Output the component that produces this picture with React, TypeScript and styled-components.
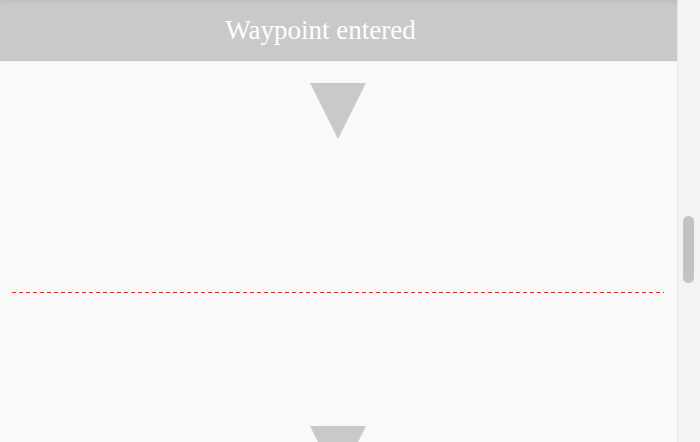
import React from "react";
import styled, { createGlobalStyle } from "styled-components";

const GlobalStyle = createGlobalStyle`
  html, body { margin: 0; padding: 0; }
  body {
    background: #f9f9f9;
    font-family: "Liberation Serif", "Times New Roman", serif;
    overflow: hidden;
  }
`;

const Page = styled.div`
  display: flex;
  width: 700px;
  height: 442px;
  overflow: hidden;
  background: #f9f9f9;
`;

const Main = styled.div`
  flex: 1;
  display: flex;
  flex-direction: column;
  min-width: 0;
`;

const Header = styled.header`
  box-sizing: border-box;
  flex: none;
  height: 61px;
  padding: 1px 36px 0 0;
  display: flex;
  align-items: center;
  justify-content: center;
  background: #c9c9c9;
  border-bottom: 1px solid #c3c3c3;
  box-shadow: inset 0 5px 4px -3px rgba(0, 0, 0, 0.07), 0 1px 2px rgba(0, 0, 0, 0.04);
  color: #ffffff;
  font-size: 27px;
  line-height: 1;
`;

const Content = styled.div`
  flex: 1;
  display: flex;
  flex-direction: column;
  align-items: center;
  padding: 22px 1px 0 0;
  overflow: hidden;
`;

const Marker = styled.div<{ $gap?: number }>`
  flex: none;
  width: 0;
  height: 0;
  margin-top: ${(p) => p.$gap ?? 0}px;
  border-left: 28px solid transparent;
  border-right: 28px solid transparent;
  border-top: 56px solid #c9c9c9;
`;

const TriggerLine = styled.div<{ $gap: number }>`
  flex: none;
  align-self: stretch;
  height: 1px;
  margin: ${(p) => p.$gap}px 12px 0 12px;
  background-image: linear-gradient(to right, #d9322f 4px, transparent 4px);
  background-size: 7px 1px;
  background-repeat: repeat-x;
`;

const ScrollTrack = styled.div`
  flex: none;
  width: 22px;
  background: #f3f3f3;
  border-left: 1px solid #e7e7e7;
  display: flex;
  justify-content: center;
`;

const ScrollThumb = styled.div`
  width: 11px;
  height: 67px;
  margin-top: 216px;
  margin-right: 1px;
  border-radius: 6px;
  background: #c3c3c3;
`;

export default function App() {
  return (
    <>
      <GlobalStyle />
      <Page>
        <Main>
          <Header>Waypoint entered</Header>
          <Content>
            <Marker />
            <TriggerLine $gap={153} />
            <Marker $gap={133} />
          </Content>
        </Main>
        <ScrollTrack>
          <ScrollThumb />
        </ScrollTrack>
      </Page>
    </>
  );
}
